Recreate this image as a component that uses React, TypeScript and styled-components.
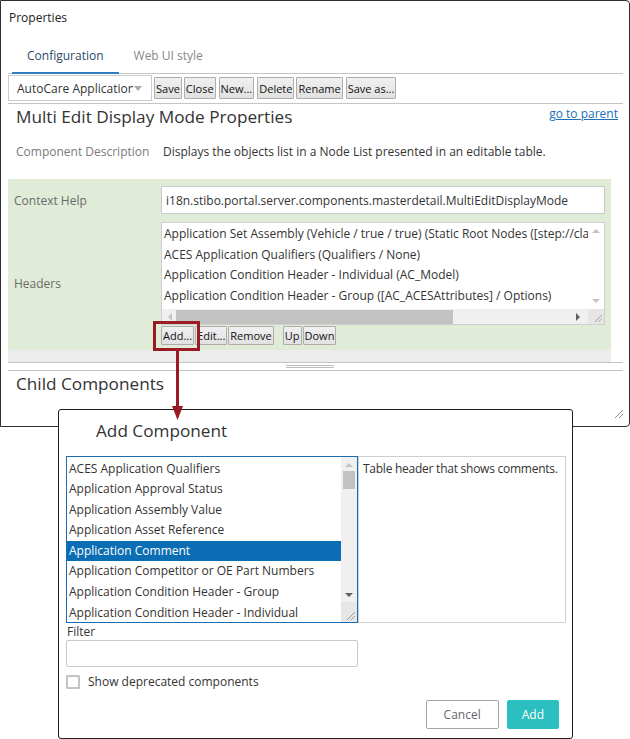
import React from 'react';
import styled, { createGlobalStyle } from 'styled-components';

const FONT = `"Open Sans", "Noto Sans", sans-serif`;

const GlobalStyle = createGlobalStyle`
  html, body {
    margin: 0;
    padding: 0;
    background: #fff;
  }
  body {
    font-family: ${FONT};
    color: #333;
  }
  * {
    box-sizing: border-box;
  }
`;

const Page = styled.div`
  position: relative;
  width: 630px;
  height: 739px;
  overflow: hidden;
  background: #fff;
`;

/* ---------- Properties window ---------- */

const Window = styled.div`
  width: 630px;
  height: 427px;
  border: 1px solid #2f2f2f;
  border-radius: 0 4px 4px 0;
  background: #fff;
  padding: 0 6px 0 7px;
  display: flex;
  flex-direction: column;
`;

const TitleBar = styled.div`
  height: 32px;
  padding-left: 1px;
  display: flex;
  align-items: center;
  font-size: 12px;
  color: #222;
`;

const TabBar = styled.div`
  display: flex;
  border-bottom: 1px solid #c4c4c4;
`;

const Tab = styled.div<{ $active?: boolean }>`
  padding: 13px 15px 6px;
  line-height: 20px;
  font-size: 12px;
  color: ${(p) => (p.$active ? '#2a4a6a' : '#888')};
  border-bottom: 2px solid ${(p) => (p.$active ? '#2f7dc0' : 'transparent')};
  margin-bottom: -1px;
  margin-left: ${(p) => (p.$active ? '4px' : '0')};
`;

const Toolbar = styled.div`
  display: flex;
  align-items: center;
  padding: 1px 0 2px;
  border-bottom: 1px solid #c4c4c4;
`;

const Select = styled.div`
  width: 144px;
  height: 26px;
  border: 1px solid #ccc;
  background: #fff;
  display: flex;
  align-items: center;
  padding-left: 8px;
  font-size: 12px;
  color: #333;
  margin-right: 2px;
`;

const SelectText = styled.span`
  width: 116px;
  overflow: hidden;
  white-space: nowrap;
`;

const Caret = styled.span`
  width: 0;
  height: 0;
  margin-left: 1px;
  border-left: 4px solid transparent;
  border-right: 4px solid transparent;
  border-top: 5px solid #a8a8a8;
`;

const Btn = styled.button<{ $h?: number; $gap?: number }>`
  height: ${(p) => p.$h ?? 22}px;
  padding: 0 1px;
  margin: 0 ${(p) => p.$gap ?? 3}px 0 0;
  border: 1px solid #adadad;
  background: linear-gradient(#f0f0f0, #e1e1e1);
  font-family: ${FONT};
  font-size: 11px;
  color: #111;
  border-radius: 1px;
  cursor: pointer;
  white-space: nowrap;
`;

const HeaderRow = styled.div`
  display: flex;
  justify-content: space-between;
  align-items: flex-start;
  padding: 0 5px 0 8px;
  height: 31px;
`;

const Heading = styled.h1`
  margin: 0;
  font-size: 17.2px;
  font-weight: 400;
  line-height: 26px;
  color: #333;
`;

const ParentLink = styled.a`
  font-size: 12px;
  line-height: 18px;
  margin-top: 1px;
  color: #1d6fb8;
  text-decoration: underline;
`;

const DescRow = styled.div`
  display: grid;
  grid-template-columns: 147px 1fr;
  padding-left: 8px;
  margin: 8px 0 18px;
  line-height: 18px;
  font-size: 12px;
`;

const Label = styled.span<{ $tone?: string }>`
  color: ${(p) => p.$tone ?? '#6b6b6b'};
  font-size: 12px;
  align-self: center;
`;

const Value = styled.span`
  color: #333;
`;

const GreenSection = styled.div`
  margin-right: 12px;
  background: #e0ebd8;
  padding: 7px 6px 5px 6px;
  display: grid;
  grid-template-columns: 147px 1fr;
  row-gap: 8px;
`;

const TextInput = styled.div<{ $h?: number }>`
  height: ${(p) => p.$h ?? 28}px;
  border: 1px solid #c8c8c8;
  border-radius: 1px;
  background: #fff;
  display: flex;
  align-items: center;
  padding-left: 4px;
  font-size: 12px;
  color: #333;
  white-space: nowrap;
  overflow: hidden;
`;

const HeaderField = styled.div`
  display: flex;
  flex-direction: column;
`;

const ListBox = styled.div`
  height: 103px;
  border: 1px solid #cfcfcf;
  background: #fff;
  display: grid;
  grid-template-columns: 1fr 16px;
  grid-template-rows: 1fr 15px;
`;

const ListItems = styled.div`
  overflow: hidden;
  padding-top: 1px;
`;

const ListRow = styled.div<{ $selected?: boolean }>`
  height: 20.6px;
  line-height: 20.6px;
  font-size: 12px;
  white-space: nowrap;
  padding-left: 2px;
  color: ${(p) => (p.$selected ? '#fff' : '#333')};
  background: ${(p) => (p.$selected ? '#0b6eb4' : 'transparent')};
`;

const VScroll = styled.div<{ $bg?: string }>`
  background: ${(p) => p.$bg ?? '#fff'};
  display: flex;
  flex-direction: column;
  align-items: center;
  padding: 6px 0 6px;
`;

const Thumb = styled.div<{ $w?: string; $h?: string; $top?: number }>`
  background: #c2c2c2;
  width: ${(p) => p.$w ?? '12px'};
  height: ${(p) => p.$h ?? '13px'};
  margin-top: ${(p) => p.$top ?? 0}px;
  flex: none;
`;

const Spacer = styled.div`
  flex: 1;
`;

const Arrow = styled.span<{ $dir: 'up' | 'down' | 'left' | 'right'; $color?: string }>`
  width: 0;
  height: 0;
  flex: none;
  ${(p) => {
    const c = p.$color ?? '#b2b2b2';
    switch (p.$dir) {
      case 'up':
        return `border-left: 4px solid transparent; border-right: 4px solid transparent; border-bottom: 4px solid ${c};`;
      case 'down':
        return `border-left: 4px solid transparent; border-right: 4px solid transparent; border-top: 4px solid ${c};`;
      case 'left':
        return `border-top: 4px solid transparent; border-bottom: 4px solid transparent; border-right: 4px solid ${c};`;
      default:
        return `border-top: 4px solid transparent; border-bottom: 4px solid transparent; border-left: 4px solid ${c};`;
    }
  }}
`;

const HScroll = styled.div`
  background: #f0f0f0;
  display: flex;
  align-items: center;
  padding: 0 8px 0 6px;
  gap: 4px;
`;

const Corner = styled.div<{ $h?: number; $top?: number }>`
  background: #e6e6e6;
  height: ${(p) => (p.$h ? `${p.$h}px` : 'auto')};
  margin-top: ${(p) => p.$top ?? 0}px;
  align-self: stretch;
  display: flex;
  align-items: flex-end;
  justify-content: flex-end;
  padding: 0 2px 2px 0;
`;

const ButtonRow = styled.div`
  display: flex;
  margin-top: 1px;
`;

const GrayBar = styled.div`
  height: 12px;
  margin-right: 12px;
  background: #ececec;
`;

const Splitter = styled.div`
  height: 9px;
  border-top: 1px solid #c4c4c4;
  border-bottom: 1px solid #c4c4c4;
  display: flex;
  justify-content: center;
  padding: 2px 0 0 0;
`;

const SplitGrip = styled.div`
  width: 48px;
  height: 3px;
  border-top: 1px solid #bcbcbc;
  border-bottom: 1px solid #bcbcbc;
  margin-left: -11px;
`;

const ChildHeading = styled(Heading)`
  padding-left: 8px;
`;

const WindowFooter = styled.div`
  margin-top: auto;
  display: flex;
  justify-content: flex-end;
  padding: 0 0 8px;
`;

/* ---------- Add Component dialog ---------- */

const Dialog = styled.div`
  position: absolute;
  left: 58px;
  top: 409px;
  width: 515px;
  height: 330px;
  border: 1px solid #1e1e1e;
  border-radius: 3px;
  background: #fff;
  padding: 0 13px 0 7px;
  display: flex;
  flex-direction: column;
`;

const DialogTitle = styled(Heading)`
  margin: 8px 0 12px 30px;
`;

const PickerRow = styled.div`
  display: grid;
  grid-template-columns: 292px 208px;
  height: 167px;
`;

const PickerList = styled.div`
  border: 1px solid #1b6db3;
  display: grid;
  grid-template-columns: 1fr 16px;
  overflow: hidden;
`;

const PickerItems = styled.div`
  overflow: hidden;
  padding-top: 1.5px;
`;

const PickerScroll = styled.div`
  background: #f0f0f0;
  display: flex;
  flex-direction: column;
  align-items: center;
  padding-top: 6px;
`;

const DescBox = styled.div`
  border: 1px solid #cfcfcf;
  padding: 2px 3px 2px 4px;
  line-height: 20px;
  font-size: 12px;
  letter-spacing: -0.25px;
  white-space: nowrap;
  overflow: hidden;
  color: #333;
`;

const FieldLabel = styled.div`
  font-size: 12px;
  line-height: 17px;
  margin-left: 1px;
  color: #333;
`;

const FilterInput = styled(TextInput)`
  width: 292px;
  border-radius: 2px;
`;

const CheckRow = styled.label`
  display: flex;
  align-items: center;
  gap: 8px;
  margin-top: 6px;
  font-size: 12px;
  color: #333;
`;

const CheckBox = styled.span`
  width: 14px;
  height: 14px;
  border: 2px solid #c4c4c4;
  border-radius: 1px;
  background: #fff;
`;

const DialogActions = styled.div`
  margin-top: auto;
  margin-bottom: 9px;
  display: flex;
  justify-content: flex-end;
  gap: 8px;
`;

const ActionButton = styled.button<{ $primary?: boolean }>`
  height: 29px;
  padding: 0 ${(p) => (p.$primary ? '14px' : '17px')};
  border-radius: 2px;
  font-family: ${FONT};
  font-size: 12px;
  border: 1px solid ${(p) => (p.$primary ? '#2bbfbf' : '#a5a5a5')};
  background: ${(p) => (p.$primary ? '#2bbfbf' : '#fff')};
  color: ${(p) => (p.$primary ? '#fff' : '#666')};
  cursor: pointer;
`;

/* ---------- annotations ---------- */

const Highlight = styled.div`
  position: absolute;
  left: 153px;
  top: 321px;
  width: 47px;
  height: 30px;
  border: 3px solid #9a1b24;
`;

const PointerArrow = styled.svg`
  position: absolute;
  left: 171px;
  top: 350px;
`;

const Grip = ({ size = 10, color = '#9a9a9a' }: { size?: number; color?: string }) => (
  <svg width={size} height={size} viewBox="0 0 10 10">
    <line x1="2" y1="10" x2="10" y2="2" stroke={color} strokeWidth="1" />
    <line x1="6" y1="10" x2="10" y2="6" stroke={color} strokeWidth="1" />
  </svg>
);

const headerItems = [
  'Application Set Assembly (Vehicle / true / true) (Static Root Nodes ([step://classification?id=AC_Root]))',
  'ACES Application Qualifiers (Qualifiers / None)',
  'Application Condition Header - Individual (AC_Model)',
  'Application Condition Header - Group ([AC_ACESAttributes] / Options)',
];

const components = [
  'ACES Application Qualifiers',
  'Application Approval Status',
  'Application Assembly Value',
  'Application Asset Reference',
  'Application Comment',
  'Application Competitor or OE Part Numbers',
  'Application Condition Header - Group',
  'Application Condition Header - Individual',
];

const App: React.FC = () => {
  return (
    <Page>
      <GlobalStyle />
      <Window>
        <TitleBar>Properties</TitleBar>
        <TabBar>
          <Tab $active>Configuration</Tab>
          <Tab>Web UI style</Tab>
        </TabBar>
        <Toolbar>
          <Select>
            <SelectText>AutoCare Application Display</SelectText>
            <Caret />
          </Select>
          <Btn $gap={2}>Save</Btn>
          <Btn>Close</Btn>
          <Btn>New...</Btn>
          <Btn $gap={2}>Delete</Btn>
          <Btn>Rename</Btn>
          <Btn>Save as...</Btn>
        </Toolbar>
        <HeaderRow>
          <Heading>Multi Edit Display Mode Properties</Heading>
          <ParentLink href="#">go to parent</ParentLink>
        </HeaderRow>
        <DescRow>
          <Label $tone="#7a7a7a">Component Description</Label>
          <Value>Displays the objects list in a Node List presented in an editable table.</Value>
        </DescRow>
        <GreenSection>
          <Label>Context Help</Label>
          <TextInput>i18n.stibo.portal.server.components.masterdetail.MultiEditDisplayMode</TextInput>
          <Label>Headers</Label>
          <HeaderField>
            <ListBox>
              <ListItems>
                {headerItems.map((h) => (
                  <ListRow key={h}>{h}</ListRow>
                ))}
              </ListItems>
              <VScroll>
                <Arrow $dir="up" $color="#c4c4c4" />
                <Spacer />
                <Arrow $dir="down" $color="#c4c4c4" />
              </VScroll>
              <HScroll>
                <Arrow $dir="left" $color="#c4c4c4" />
                <Thumb $w="277px" $h="14px" />
                <Spacer />
                <Arrow $dir="right" $color="#606060" />
              </HScroll>
              <Corner>
                <Grip size={9} />
              </Corner>
            </ListBox>
            <ButtonRow>
              <Btn $h={19} $gap={1}>Add...</Btn>
              <Btn $h={19} $gap={1}>Edit...</Btn>
              <Btn $h={19} $gap={9}>Remove</Btn>
              <Btn $h={19} $gap={1}>Up</Btn>
              <Btn $h={19}>Down</Btn>
            </ButtonRow>
          </HeaderField>
        </GreenSection>
        <GrayBar />
        <Splitter>
          <SplitGrip />
        </Splitter>
        <ChildHeading>Child Components</ChildHeading>
        <WindowFooter>
          <Grip size={10} color="#8a8a8a" />
        </WindowFooter>
      </Window>

      <Dialog>
        <DialogTitle>Add Component</DialogTitle>
        <PickerRow>
          <PickerList>
            <PickerItems>
              {components.map((c) => (
                <ListRow key={c} $selected={c === 'Application Comment'}>
                  {c}
                </ListRow>
              ))}
            </PickerItems>
            <PickerScroll>
              <Arrow $dir="up" $color="#c4c4c4" />
              <Thumb $h="18px" $top={4} />
              <Spacer />
              <Arrow $dir="down" $color="#606060" />
              <Corner $h={20} $top={5}>
                <Grip size={10} />
              </Corner>
            </PickerScroll>
          </PickerList>
          <DescBox>Table header that shows comments.</DescBox>
        </PickerRow>
        <FieldLabel>Filter</FieldLabel>
        <FilterInput $h={27} />
        <CheckRow>
          <CheckBox />
          Show deprecated components
        </CheckRow>
        <DialogActions>
          <ActionButton>Cancel</ActionButton>
          <ActionButton $primary>Add</ActionButton>
        </DialogActions>
      </Dialog>

      <Highlight />
      <PointerArrow width="13" height="71" viewBox="0 0 13 71">
        <line x1="6.5" y1="0" x2="6.5" y2="58" stroke="#9a1b24" strokeWidth="3" />
        <polygon points="1,56 12,56 6.5,70" fill="#9a1b24" />
      </PointerArrow>
    </Page>
  );
};

export default App;
